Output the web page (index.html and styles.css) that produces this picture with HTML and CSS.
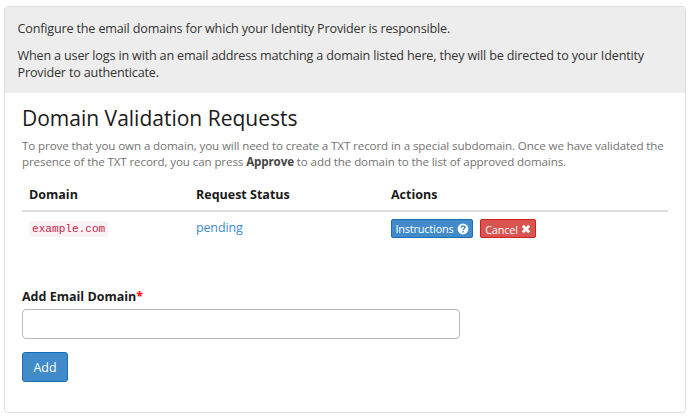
FILE: index.html
```html
<!DOCTYPE html>
<html lang="en">
<head>
    <meta charset="UTF-8">
    <meta name="viewport" content="width=device-width, initial-scale=1.0">
    <title>Email Domains</title>
    <link rel="stylesheet" href="styles.css">
</head>
<body>

<div class="panel">
    <div class="panel-heading">
        <p>Configure the email domains for which your Identity Provider is responsible.</p>
        <p>When a user logs in with an email address matching a domain listed here, they will be directed to your Identity Provider to authenticate.</p>
    </div>
    <div class="panel-body">
        <h3>Domain Validation Requests</h3>
        <p class="help-block">To prove that you own a domain, you will need to create a TXT record in a special subdomain. Once we have validated the presence of the TXT record, you can press <strong>Approve</strong> to add the domain to the list of approved domains.</p>

        <table class="table">
            <thead>
                <tr>
                    <th class="col-domain">Domain</th>
                    <th class="col-status">Request Status</th>
                    <th>Actions</th>
                </tr>
            </thead>
            <tbody>
                <tr>
                    <td><code>example.com</code></td>
                    <td><a class="status" href="#">pending</a></td>
                    <td>
                        <div class="actions">
                            <button type="button" class="btn btn-xs btn-primary">Instructions
                                <svg class="icon" viewBox="0 0 12 12"><circle cx="6" cy="6" r="5.4" fill="#fff"/><path d="M4.1 4.7C4.2 3.4 5 2.9 6 2.9c1.1 0 1.9.6 1.9 1.6C7.9 5.8 6.1 5.7 6.1 7.1" fill="none" stroke="#428bca" stroke-width="1.5"/><path d="M5.3 8h1.5v1.4H5.3z" fill="#428bca"/></svg>
                            </button>
                            <button type="button" class="btn btn-xs btn-danger">Cancel
                                <svg class="icon icon-times" viewBox="0 0 10 10"><path d="M1.8 1.8l6.4 6.4M8.2 1.8L1.8 8.2" stroke="#fff" stroke-width="2.8"/></svg>
                            </button>
                        </div>
                    </td>
                </tr>
            </tbody>
        </table>

        <form class="add-form">
            <label for="email-domain">Add Email Domain<span class="required">*</span></label>
            <input type="text" class="form-control" id="email-domain">
            <button type="button" class="btn btn-primary">Add</button>
        </form>
    </div>
</div>

</body>
</html>
```

FILE: styles.css
```css
* {
    box-sizing: border-box;
}
body {
    margin: 0;
    padding: 6px 4px 0;
    font-family: "Open Sans", sans-serif;
    font-size: 12.5px;
    line-height: 17.6px;
    color: #1a1a1a;
    background-color: #fff;
}
p, h3 {
    margin: 0;
}

/* panel */
.panel {
    width: 682px;
    height: 407px;
    border: 1px solid #ddd;
    border-radius: 4px;
    overflow: hidden;
}
.panel-heading {
    height: 86px;
    padding: 13px 12.5px 0;
    font-size: 12.6px;
    letter-spacing: -0.17px;
    background-color: #ededed;
    color: #333;
}
.panel-heading p + p {
    margin-top: 9px;
}
.panel-body {
    padding: 12px 17px;
}
.panel-body h3 {
    font-size: 21px;
    font-weight: 400;
    line-height: 26px;
}
.help-block {
    margin-top: 7px;
    font-size: 11.6px;
    letter-spacing: -0.11px;
    line-height: 16px;
    color: #737373;
}
.help-block strong {
    color: #444;
}

/* requests table */
.table {
    width: 646px;
    margin-top: 9px;
    border-collapse: collapse;
    table-layout: fixed;
}
.table th, .table td {
    padding: 7px;
    text-align: left;
    vertical-align: top;
}
.table th {
    height: 32px;
    padding-bottom: 5px;
    border-bottom: 2px solid #ddd;
}
.col-domain {
    width: 167px;
}
.col-status {
    width: 195px;
}
code {
    padding: 2px 3px;
    font-family: "Liberation Mono", monospace;
    font-size: 11.1px;
    color: #c7254e;
    background-color: #f9f2f4;
    border-radius: 3px;
}
.status {
    color: #428bca;
    letter-spacing: -0.15px;
    text-decoration: none;
}
.actions {
    display: flex;
    gap: 7px;
}

/* buttons */
.btn {
    display: flex;
    align-items: center;
    justify-content: center;
    width: 46px;
    height: 30px;
    padding: 0;
    font-family: inherit;
    font-size: 12.4px;
    color: #fff;
    border: 1px solid;
    border-radius: 3px;
}
.btn-xs {
    width: 82px;
    height: 19px;
    gap: 3px;
    font-size: 10.9px;
    letter-spacing: -0.17px;
    border-radius: 2px;
}
.btn-primary {
    background-color: #428bca;
    border-color: #1d6db5;
}
.btn-danger {
    width: 56px;
    padding-top: 1px;
    background-color: #d9534f;
    border-color: #d0211c;
}
.icon {
    width: 12px;
    height: 12px;
}
.icon-times {
    width: 10px;
    height: 10px;
}

/* add domain form */
.add-form {
    margin-top: 42px;
}
.add-form label {
    display: block;
    font-weight: 700;
}
.required {
    color: #f00;
}
.form-control {
    display: block;
    width: 438px;
    height: 30px;
    margin: 4px 0 13px;
    border: 1px solid #bbb;
    border-radius: 4px;
    background-color: #fff;
}
```
